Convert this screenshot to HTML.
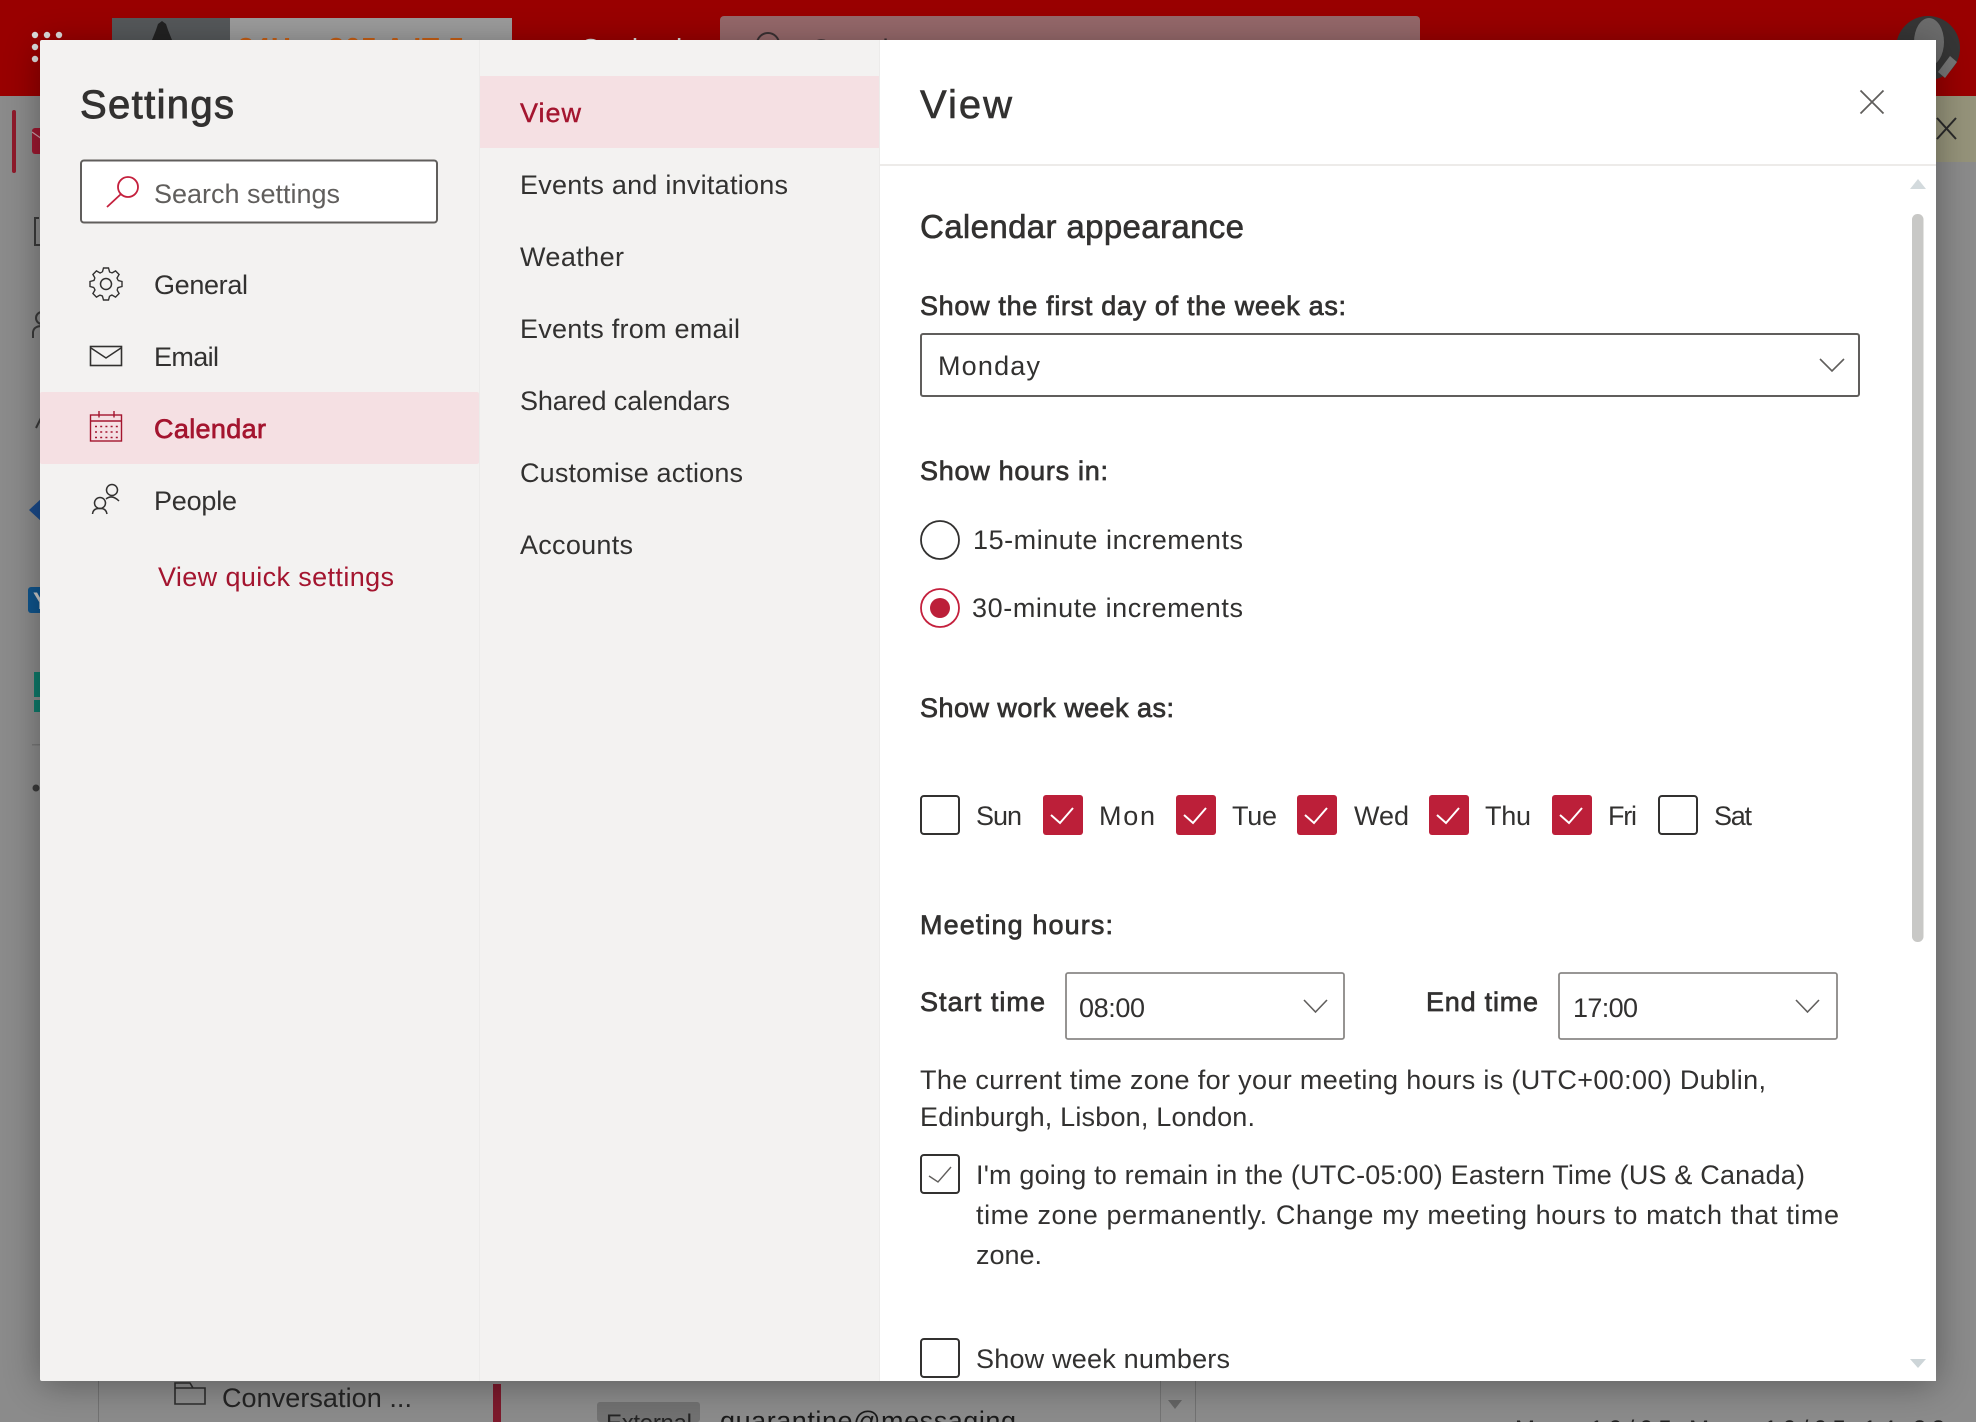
<!DOCTYPE html>
<html lang="en">
<head>
<meta charset="utf-8">
<title>Settings</title>
<style>
html,body{margin:0;padding:0;width:1976px;height:1422px;overflow:hidden;background:#8a8a8a}
svg{display:block}
text{font-family:"Liberation Sans",sans-serif;font-size:27px;fill:#323130}
.sb{stroke:#323130;stroke-width:.7px}
.cr{fill:#a4152f}
.crs{fill:#a4152f;stroke:#a4152f;stroke-width:.7px}
.box{fill:#fff;stroke:#323130;stroke-width:2}
.on{fill:#bc1f39}
.chk{fill:none;stroke:#fff;stroke-width:2}
.chev{fill:none;stroke:#605e5c;stroke-width:1.6}
</style>
</head>
<body>
<svg width="1976" height="1422" viewBox="0 0 1976 1422" xmlns="http://www.w3.org/2000/svg">
<defs>
<filter id="sh" x="-10%" y="-10%" width="120%" height="120%"><feGaussianBlur stdDeviation="18"/></filter>
<path id="t" d="M-3.6-12L-2.5-16L2.5-16L3.6-12A12.5 12.5 0 0 1 5.94-11.03" fill="none" stroke="#323130" stroke-width="1.4"/>
</defs>

<!-- backdrop -->
<rect width="1976" height="1422" fill="#8b8b8b"/>
<rect y="0" width="1976" height="96" fill="#990000"/>
<rect x="1936" y="96" width="40" height="66" fill="#95937a"/>
<path d="M1937 118L1956 139M1956 118L1937 139" stroke="#2a2a2a" stroke-width="2"/>
<rect x="112" y="18" width="118" height="40" fill="#55585a"/>
<path d="M152 40L156 30L158 24L162 21L166 24L168 30L172 40Z" fill="#222"/>
<rect x="230" y="18" width="282" height="40" fill="#9c9c9c"/>
<text x="238" y="57" textLength="226" lengthAdjust="spacing" font-weight="700" style="font-size:28px;fill:#c85f14">24Hrs 365 A IT 5</text>
<text x="580" y="58" textLength="110" lengthAdjust="spacing" style="font-size:28px;fill:#d9d9d9">Outlook</text>
<rect x="720" y="16" width="700" height="60" rx="4" fill="#95686a"/>
<circle cx="768" cy="44" r="11" fill="none" stroke="#3a3032" stroke-width="2"/>
<text x="812" y="58" style="font-size:27px;fill:#3a3032">Search</text>
<circle cx="35" cy="35" r="3.2" fill="#ddd"/><circle cx="47" cy="35" r="3.2" fill="#ddd"/><circle cx="59" cy="35" r="3.2" fill="#ddd"/>
<circle cx="35" cy="47" r="3.2" fill="#ddd"/><circle cx="35" cy="59" r="3.2" fill="#ddd"/>
<circle cx="1928" cy="48" r="32" fill="#363636"/>
<ellipse cx="1929" cy="42" rx="15" ry="24" fill="#6c6c6c"/>
<path d="M1938 72L1950 56L1957 62L1945 78Z" fill="#767676"/>

<!-- left rail -->
<rect x="12" y="110" width="4" height="63" rx="2" fill="#8f1a2b"/>
<rect x="32" y="128" width="12" height="26" rx="3" fill="#9d1830"/>
<path d="M32 132L42 139" fill="none" stroke="#c9a0a8" stroke-width="1.2"/>
<path d="M39 218H35V245H42" fill="none" stroke="#3a3a3a" stroke-width="2"/>
<circle cx="42" cy="318" r="6" fill="none" stroke="#3a3a3a" stroke-width="2"/>
<path d="M33 338V332Q34 326 42 326" fill="none" stroke="#3a3a3a" stroke-width="2"/>
<path d="M36 428L42 416" fill="none" stroke="#3a3a3a" stroke-width="2"/>
<path d="M29 510L42 498V522Z" fill="#1a4a8a"/>
<rect x="28" y="587" width="16" height="26" rx="3" fill="#0f548c"/>
<text x="33" y="609" font-weight="700" style="font-size:24px;fill:#c9c9c9">Y</text>
<path d="M34 672H44V697H34Z M34 700H44V712H34Z" fill="#0e7a6a"/>
<rect x="32" y="744" width="10" height="1.5" fill="#777"/>
<circle cx="36" cy="788" r="3.5" fill="#3a3a3a"/>

<!-- bottom peek -->
<rect x="98" y="1381" width="1" height="41" fill="#727272"/>
<rect x="1195" y="1381" width="1" height="41" fill="#727272"/>
<rect x="1160" y="1381" width="1" height="41" fill="#747474"/>
<path d="M175 1404V1383H190L193 1388H205V1404Z M175 1388H193" fill="none" stroke="#2d2d2d" stroke-width="1.6"/>
<text x="222" y="1407" textLength="190" lengthAdjust="spacing" style="fill:#242424">Conversation ...</text>
<rect x="493" y="1384" width="8" height="38" fill="#7d1a2c"/>
<rect x="597" y="1402" width="103" height="20" rx="3" fill="#717171"/>
<text x="606" y="1431" textLength="86" lengthAdjust="spacing" style="font-size:24px;fill:#242424">External</text>
<text x="720" y="1430" textLength="296" lengthAdjust="spacing" style="fill:#1a1a1a">quarantine@messaging</text>
<path d="M1168 1400H1182L1175 1409Z" fill="#646464"/>
<text x="1515" y="1437" textLength="430" lengthAdjust="spacing" style="font-size:24px;fill:#222">Mon 10/05 Mon 10/05 14:22</text>

<!-- modal shadow -->
<rect x="40" y="46" width="1896" height="1338" fill="#000" opacity=".35" filter="url(#sh)"/>

<!-- modal -->
<rect x="40" y="40" width="1896" height="1341" rx="2" fill="#f3f2f1"/>
<rect x="880" y="40" width="1056" height="1341" fill="#fff"/>
<rect x="479" y="40" width="1" height="1341" fill="#ecebea"/>
<rect x="879" y="40" width="1" height="1341" fill="#ecebea"/>
<rect x="880" y="164" width="1056" height="2" fill="#edebe9"/>

<!-- col 1 -->
<text x="80" y="118" textLength="154" lengthAdjust="spacing" style="font-size:40px;stroke:#323130;stroke-width:.9px">Settings</text>
<rect x="81" y="160.5" width="356" height="62" rx="3" fill="#fff" stroke="#605e5c" stroke-width="2"/>
<circle cx="128" cy="187" r="10" fill="none" stroke="#c4203d" stroke-width="1.8"/>
<path d="M121 194L107 207" stroke="#c4203d" stroke-width="1.8"/>
<text x="154" y="203" textLength="186" lengthAdjust="spacing" style="fill:#605e5c">Search settings</text>

<g transform="translate(106 284)">
<use href="#t"/><use href="#t" transform="rotate(45)"/><use href="#t" transform="rotate(90)"/><use href="#t" transform="rotate(135)"/><use href="#t" transform="rotate(180)"/><use href="#t" transform="rotate(225)"/><use href="#t" transform="rotate(270)"/><use href="#t" transform="rotate(315)"/>
<circle r="5.5" fill="none" stroke="#323130" stroke-width="1.5"/>
</g>
<text x="154" y="294" textLength="94" lengthAdjust="spacing">General</text>

<rect x="90.5" y="346.5" width="31" height="19" fill="none" stroke="#323130" stroke-width="1.6"/>
<path d="M91 348L106 358L121 348" fill="none" stroke="#323130" stroke-width="1.5"/>
<text x="154" y="366" textLength="65" lengthAdjust="spacing">Email</text>

<rect x="40" y="392" width="439" height="72" rx="2" fill="#f5e0e3"/>
<rect x="90.500" y="415" width="31" height="26" fill="none" stroke="#a4152f" stroke-width="1.400"/>
<path d="M91 421H121M99 411V417.500M114 411V417.500" fill="none" stroke="#a4152f" stroke-width="1.400"/>
<path d="M95 426.500H118M95 432H118M95 437.500H118" fill="none" stroke="#a4152f" stroke-width="1.600" stroke-dasharray="2 3.200"/>
<text class="crs" x="154" y="438" textLength="112" lengthAdjust="spacing">Calendar</text>

<circle cx="112" cy="490" r="5.500" fill="none" stroke="#323130" stroke-width="1.500"/>
<path d="M106 499Q112 494 119 501" fill="none" stroke="#323130" stroke-width="1.500"/>
<circle cx="100" cy="503" r="5.500" fill="none" stroke="#323130" stroke-width="1.500"/>
<path d="M92.500 514Q93 508 100 508.500Q106 508 107 514" fill="none" stroke="#323130" stroke-width="1.500"/>
<text x="154" y="510" textLength="83" lengthAdjust="spacing">People</text>

<text class="cr" x="158" y="586" textLength="236" lengthAdjust="spacing">View quick settings</text>

<!-- col 2 -->
<rect x="480" y="76" width="399" height="72" fill="#f5e0e3"/>
<text class="crs" x="520" y="122" textLength="61" lengthAdjust="spacing" style="stroke-width:.4px">View</text>
<text x="520" y="194" textLength="268" lengthAdjust="spacing">Events and invitations</text>
<text x="520" y="266" textLength="104" lengthAdjust="spacing">Weather</text>
<text x="520" y="338" textLength="220" lengthAdjust="spacing">Events from email</text>
<text x="520" y="410" textLength="210" lengthAdjust="spacing">Shared calendars</text>
<text x="520" y="482" textLength="223" lengthAdjust="spacing">Customise actions</text>
<text x="520" y="554" textLength="113" lengthAdjust="spacing">Accounts</text>

<!-- col 3 header -->
<text x="920" y="118" textLength="92" lengthAdjust="spacing" style="font-size:40px;stroke:#323130;stroke-width:.6px">View</text>
<path d="M1860.500 90.500L1883.500 113.500M1883.500 90.500L1860.500 113.500" stroke="#605e5c" stroke-width="1.800"/>

<!-- scrollbar -->
<path d="M1910 189L1918 179L1926 189Z" fill="#d3dadd"/>
<rect x="1912" y="214" width="11.500" height="728" rx="5.500" fill="#c8c8c6"/>
<path d="M1910 1359H1926L1918 1368Z" fill="#cdd5d8"/>

<!-- content -->
<text x="920" y="238" textLength="324" lengthAdjust="spacing" style="font-size:33px;stroke:#323130;stroke-width:.6px">Calendar appearance</text>

<text class="sb" x="920" y="315" textLength="426" lengthAdjust="spacing">Show the first day of the week as:</text>
<rect x="921" y="334" width="938" height="62" rx="2" fill="#fff" stroke="#605e5c" stroke-width="2"/>
<text x="938" y="375" textLength="102" lengthAdjust="spacing">Monday</text>
<path class="chev" d="M1820 359L1832 371L1844 359"/>

<text class="sb" x="920" y="480" textLength="188" lengthAdjust="spacing">Show hours in:</text>
<circle cx="940" cy="540" r="19" fill="#fff" stroke="#323130" stroke-width="1.800"/>
<text x="973" y="549" textLength="270" lengthAdjust="spacing">15-minute increments</text>
<circle cx="940" cy="608" r="19" fill="#fff" stroke="#c4203d" stroke-width="1.800"/>
<circle cx="940" cy="608" r="10" fill="#bc1f39"/>
<text x="972" y="617" textLength="271" lengthAdjust="spacing">30-minute increments</text>

<text class="sb" x="920" y="717" textLength="254" lengthAdjust="spacing">Show work week as:</text>

<rect class="box" x="921" y="796" width="38" height="38" rx="3"/>
<text x="976" y="825" textLength="46" lengthAdjust="spacing">Sun</text>
<rect class="on" x="1043" y="795" width="40" height="40" rx="3"/>
<path class="chk" d="M1051 815L1060 823L1073 808"/>
<text x="1099" y="825" textLength="56" lengthAdjust="spacing">Mon</text>
<rect class="on" x="1176" y="795" width="40" height="40" rx="3"/>
<path class="chk" d="M1184 815L1193 823L1206 808"/>
<text x="1232" y="825" textLength="45" lengthAdjust="spacing">Tue</text>
<rect class="on" x="1297" y="795" width="40" height="40" rx="3"/>
<path class="chk" d="M1305 815L1314 823L1327 808"/>
<text x="1354" y="825" textLength="55" lengthAdjust="spacing">Wed</text>
<rect class="on" x="1429" y="795" width="40" height="40" rx="3"/>
<path class="chk" d="M1437 815L1446 823L1459 808"/>
<text x="1485" y="825" textLength="46" lengthAdjust="spacing">Thu</text>
<rect class="on" x="1552" y="795" width="40" height="40" rx="3"/>
<path class="chk" d="M1560 815L1569 823L1582 808"/>
<text x="1608" y="825" textLength="29" lengthAdjust="spacing">Fri</text>
<rect class="box" x="1659" y="796" width="38" height="38" rx="3"/>
<text x="1714" y="825" textLength="38" lengthAdjust="spacing">Sat</text>

<text class="sb" x="920" y="934" textLength="193" lengthAdjust="spacing">Meeting hours:</text>
<text class="sb" x="920" y="1011" textLength="125" lengthAdjust="spacing">Start time</text>
<rect x="1066" y="973" width="278" height="66" rx="2" fill="#fff" stroke="#8a8886" stroke-width="1.800"/>
<text x="1079" y="1017" textLength="66" lengthAdjust="spacing">08:00</text>
<path class="chev" d="M1304 1000L1315.500 1012L1327 1000"/>
<text class="sb" x="1426" y="1011" textLength="112" lengthAdjust="spacing">End time</text>
<rect x="1559" y="973" width="278" height="66" rx="2" fill="#fff" stroke="#8a8886" stroke-width="1.800"/>
<text x="1573" y="1017" textLength="65" lengthAdjust="spacing">17:00</text>
<path class="chev" d="M1796 1000L1807.500 1012L1819 1000"/>

<text x="920" y="1089" textLength="846" lengthAdjust="spacing">The current time zone for your meeting hours is (UTC+00:00) Dublin,</text>
<text x="920" y="1126" textLength="335" lengthAdjust="spacing">Edinburgh, Lisbon, London.</text>

<rect class="box" x="921" y="1155" width="38" height="38" rx="3"/>
<path d="M929 1176L938 1182L951 1167" fill="none" stroke="#605e5c" stroke-width="1.400"/>
<text x="976" y="1184" textLength="829" lengthAdjust="spacing">I'm going to remain in the (UTC-05:00) Eastern Time (US &amp; Canada)</text>
<text x="976" y="1224" textLength="863" lengthAdjust="spacing">time zone permanently. Change my meeting hours to match that time</text>
<text x="976" y="1264" textLength="66" lengthAdjust="spacing">zone.</text>

<rect class="box" x="921" y="1339" width="38" height="38" rx="3"/>
<text x="976" y="1368" textLength="254" lengthAdjust="spacing">Show week numbers</text>
</svg>
</body>
</html>
